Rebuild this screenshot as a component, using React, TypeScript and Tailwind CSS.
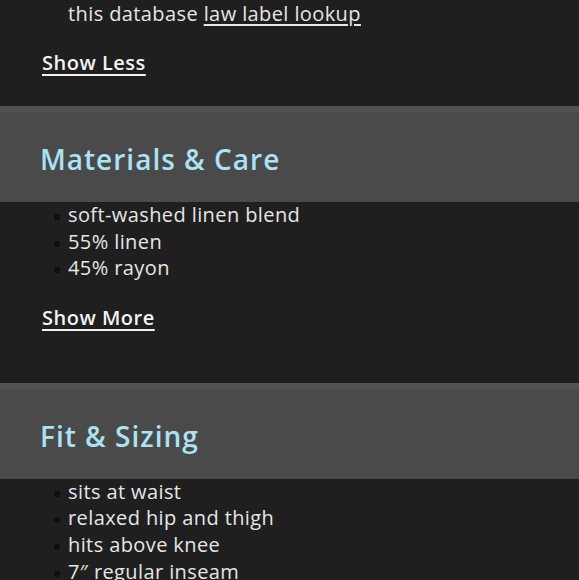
import React from "react";

const font = { fontFamily: '"Open Sans", "Noto Sans", sans-serif' };

function Bullets({ items }: { items: React.ReactNode[] }) {
  return (
    <ul className="pl-[68px]">
      {items.map((it, i) => (
        <li key={i} className="relative h-[26.6px] leading-[26.6px] text-[20px] tracking-[0.4px] text-[#e6e6e6]">
          <span className="absolute left-[-14px] top-[12px] h-[6px] w-[6px] rounded-full bg-[#0e0e0e]" />
          {it}
        </li>
      ))}
    </ul>
  );
}

function Header({ title }: { title: string }) {
  return (
    <div className="h-[96px] bg-[#4a4a4a] border-t-[6px] border-[#525252] flex items-center pl-[40px]">
      <h2 className="text-[28px] font-semibold tracking-[1px] text-[#abe2f4] mt-[4px]">{title}</h2>
    </div>
  );
}

function Toggle({ label }: { label: string }) {
  return (
    <div className="pl-[42px] h-[27px] leading-[27px]">
      <span className="text-[20px] font-semibold tracking-[0.5px] text-[#f2f2f2] underline decoration-[2px] underline-offset-[4px]">
        {label}
      </span>
    </div>
  );
}

export default function App() {
  return (
    <div className="w-[579px] h-[580px] overflow-hidden bg-[#1f1f1f]" style={font}>
      <div className="pl-[68px] h-[27px] leading-[27px] text-[20px] tracking-[0.4px] text-[#e6e6e6]">
        this database <span className="underline underline-offset-[3px]">law label lookup</span>
      </div>
      <div className="mt-[22px]">
        <Toggle label="Show Less" />
      </div>
      <div className="h-[30px]" />
      <Header title="Materials & Care" />
      <Bullets items={["soft-washed linen blend", "55% linen", "45% rayon"]} />
      <div className="mt-[22px]">
        <Toggle label="Show More" />
      </div>
      <div className="h-[52px]" />
      <Header title="Fit & Sizing" />
      <Bullets items={["sits at waist", "relaxed hip and thigh", "hits above knee", "7\u2033 regular inseam"]} />
    </div>
  );
}
